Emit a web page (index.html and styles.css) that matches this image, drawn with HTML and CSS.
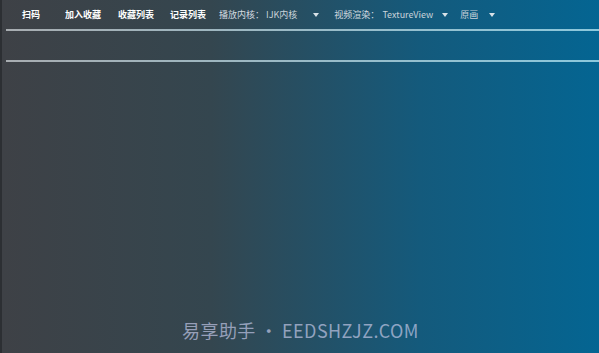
FILE: index.html
```html
<!DOCTYPE html>
<html lang="zh">
<head>
    <meta charset="UTF-8">
    <meta name="viewport" content="width=device-width, initial-scale=1.0">
    <title>播放器</title>
    <link rel="stylesheet" href="styles.css">
</head>
<body>
    <div class="page">
        <div class="toolbar">
            <span class="btn btn-scan">扫码</span>
            <span class="btn btn-fav">加入收藏</span>
            <span class="btn btn-list">收藏列表</span>
            <span class="btn btn-history">记录列表</span>
            <span class="label">播放内核：</span>
            <span class="select select-core">IJK内核<i class="arrow"></i></span>
            <span class="label label-render">视频渲染：</span>
            <span class="select select-render">TextureView<i class="arrow"></i></span>
            <span class="select">原画<i class="arrow"></i></span>
        </div>
        <div class="line"></div>
        <div class="url-bar"></div>
        <div class="line"></div>
        <div class="content"></div>
        <div class="watermark">易享助手<span class="dot">•</span>EEDSHZJZ.COM</div>
    </div>
</body>
</html>
```

FILE: styles.css
```css
* {
    margin: 0;
    padding: 0;
    box-sizing: border-box;
}

body {
    width: 599px;
    height: 353px;
    overflow: hidden;
    font-family: "Noto Sans CJK SC", "Noto Sans", sans-serif;
}

.page {
    height: 353px;
    display: flex;
    flex-direction: column;
    border-left: 2px solid #2c2f33;
    background: linear-gradient(to right, #3e4146 0%, #34464f 35%, #145a7c 70%, #046592 100%);
}

.toolbar {
    height: 29px;
    display: flex;
    align-items: center;
    padding-left: 20px;
    font-size: 9px;
    color: #ffffff;
    white-space: nowrap;
}

.btn {
    font-weight: bold;
}

.btn-scan {
    margin-right: 25px;
}

.btn-fav {
    margin-right: 17px;
}

.btn-list {
    margin-right: 16px;
}

.btn-history {
    margin-right: 13px;
}

.label {
    color: #d4dbe0;
    margin-right: 2px;
}

.label-render {
    margin-right: 3px;
}

.select {
    color: #c9d3da;
    display: flex;
    align-items: center;
    margin-right: 14px;
}

.select-core {
    margin-right: 15px;
}

.select-core .arrow {
    margin-left: 16px;
}

.select-render {
    margin-right: 12px;
}

.select-render .arrow {
    margin-left: 9px;
}

.arrow {
    display: inline-block;
    width: 0;
    height: 0;
    margin-left: 11px;
    border-left: 3px solid transparent;
    border-right: 3px solid transparent;
    border-top: 4px solid #d8e2e8;
}

.line {
    height: 2px;
    margin-left: 4px;
    background: linear-gradient(to right, #a8adb1, #8cc8dc);
}

.url-bar {
    height: 29px;
}

.content {
    flex: 1;
}

.watermark {
    text-align: center;
    font-size: 18px;
    color: rgba(190, 195, 225, 0.72);
    padding-bottom: 10px;
    letter-spacing: 0.4px;
}

.dot {
    margin: 0 4px;
}
```
